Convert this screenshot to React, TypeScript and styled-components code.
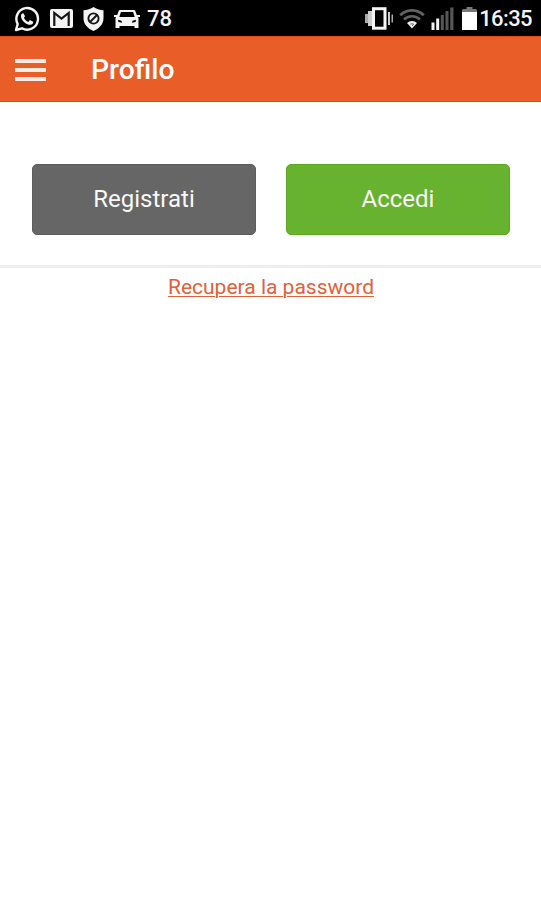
import React from "react";
import styled, { createGlobalStyle } from "styled-components";

const GlobalStyle = createGlobalStyle`
  * { box-sizing: border-box; }
  body { margin: 0; background: #fff; font-family: Roboto, "Noto Sans", sans-serif; }
`;

const Screen = styled.div`
  display: flex;
  flex-direction: column;
  min-height: 900px;
  background: #fff;
`;

const StatusBar = styled.div`
  display: flex;
  justify-content: space-between;
  height: 36px;
  padding: 0 9px 0 14px;
  background: #000;
  color: #f4f4f4;
`;

const StatusGroup = styled.div<{ $gap: number }>`
  display: flex;
  align-items: center;
  gap: ${(p) => p.$gap}px;
  height: 37px;
`;

const Glyph = styled.svg`
  display: block;
  flex: none;
`;

const StatusText = styled.span<{ $spacing?: number; $shift?: number }>`
  margin-left: ${(p) => p.$shift ?? 0}px;
  font-size: 22px;
  font-weight: 500;
  line-height: 36px;
  letter-spacing: ${(p) => p.$spacing ?? 0}px;
`;

const Header = styled.header`
  display: flex;
  align-items: center;
  gap: 45px;
  height: 66px;
  padding: 0 15px;
  background: #e95d28;
  border-top: 1px solid #e4480c;
  border-bottom: 1px solid #e4480c;
`;

const MenuButton = styled.button`
  display: flex;
  flex-direction: column;
  gap: 5px;
  width: 31px;
  margin-top: 2px;
  padding: 0;
  border: 0;
  background: none;
`;

const MenuLine = styled.span`
  height: 4px;
  background: #fdeae2;
`;

const Title = styled.h1`
  margin: 2px 0 0;
  color: #fff;
  font-size: 28.3px;
  font-weight: 500;
  line-height: 64px;
`;

const Actions = styled.div`
  display: grid;
  grid-template-columns: 1fr 1fr;
  gap: 30px;
  height: 166px;
  padding: 62px 31px 30px 32px;
  border-bottom: 3px solid #eeeeee;
`;

const ActionButton = styled.button<{ $color: string; $edge: string }>`
  height: 71px;
  padding: 0 0 2px;
  border: 1px solid ${(p) => p.$edge};
  border-radius: 5px;
  background: ${(p) => p.$color};
  color: #f8f8f8;
  font: 400 24px Roboto, "Noto Sans", sans-serif;
`;

const RecoverLink = styled.a`
  align-self: center;
  margin: 6px 0 0 1px;
  color: #e2603a;
  font-size: 21px;
  line-height: 26px;
  text-decoration: underline;
  text-decoration-thickness: 1px;
  text-underline-offset: 2px;
`;

const WhatsAppIcon = () => (
  <Glyph width="26" height="26" viewBox="0 0 26 26">
    <path d="M2 24l1.7-6A10.8 10.8 0 1 1 8 22.3z" fill="none" stroke="#f4f4f4" strokeWidth="2.4" strokeLinejoin="round" />
    <path d="M9.3 7.2c-.7-.3-2.3.7-2.3 2.7 0 4.4 5.2 9 9.2 8.9 1.9-.1 3.1-1.4 3-3.1l-3.3-1.6-1.6 1.8c-2-.7-3.6-2.3-4.4-4.2l1.2-1.5z" fill="#f4f4f4" />
  </Glyph>
);

const GmailIcon = () => (
  <Glyph width="23" height="19" viewBox="0 0 23 19">
    <rect width="23" height="19" rx="2" fill="#f4f4f4" />
    <path d="M4.3 17V4L11.5 9.7 18.7 4v13" fill="none" stroke="#161616" strokeWidth="2.2" />
  </Glyph>
);

const ShieldIcon = () => (
  <Glyph width="21" height="24" viewBox="0 0 21 24">
    <path d="M10.5 0C8 2 4 3.2.5 3.2v8C.5 17.5 5 21.5 10.5 24 16 21.5 20.5 17.5 20.5 11.2v-8C17 3.2 13 2 10.5 0z" fill="#f4f4f4" />
    <circle cx="10.5" cy="11.5" r="5.1" fill="none" stroke="#161616" strokeWidth="1.9" />
    <path d="M7 15l7-7" stroke="#161616" strokeWidth="1.9" />
  </Glyph>
);

const CarIcon = () => (
  <Glyph width="26" height="18" viewBox="0 0 26 18">
    <path
      fillRule="evenodd"
      d="M6.5 0h13c1 0 1.7.5 2 1.4L22.8 5H26v2h-2l.5 1.2V18h-4v-2h-15v2h-4V8.2L2 7H0V5h3.2l1.3-3.6C4.8.5 5.5 0 6.5 0zm.4 2L5.3 7h15.4l-1.6-5zM4 9.7l.4 2.3 3.8.7-.8-2zm18 0l-3.4 1-.8 2 3.8-.7z"
      fill="#f4f4f4"
    />
  </Glyph>
);

const VibrateIcon = () => (
  <Glyph width="28" height="23" viewBox="0 0 28 23">
    <path d="M0 7h3v9H0z" fill="#aaa" />
    <path d="M3 4h4v15H3zM23 5h2v13h-2z" fill="#ccc" />
    <path d="M26.5 7.5h1.5v8h-1.5z" fill="#aaa" />
    <rect x="8.5" y="1.7" width="11.5" height="19.5" fill="#000" stroke="#f4f4f4" strokeWidth="3" />
  </Glyph>
);

const WifiIcon = () => (
  <Glyph width="26" height="20" viewBox="0 0 26 20">
    <path d="M1.2 6.3a16.5 16.5 0 0 1 23.6 0M5 10.5a11.5 11.5 0 0 1 16 0" fill="none" stroke="#626262" strokeWidth="2.7" />
    <path d="M8 14a7 7 0 0 1 10 0l-5 5.5z" fill="#eee" />
    <path d="M11.3 15.2q1.7-1 3.4 0L13 17" fill="none" stroke="#666" strokeWidth="1" />
  </Glyph>
);

const SignalIcon = () => (
  <Glyph width="23" height="23" viewBox="0 0 23 23">
    <path d="M.5 15.5h3V23h-3zM5.2 11.5h3V23h-3z" fill="#f4f4f4" />
    <path d="M9.8 8h3v15h-3zM14.5 4h3v19h-3zM19.2.5h3.3V23h-3.3z" fill="#555" />
  </Glyph>
);

const BatteryIcon = () => (
  <Glyph width="15" height="23" viewBox="0 0 15 23">
    <path d="M4.5 0h6v2H14l1 1v3H0V3l1-1h3.5z" fill="#777" />
    <path d="M0 5h15v18H0z" fill="#fff" />
  </Glyph>
);

const BatteryClock = styled.div`
  display: flex;
  align-items: center;
  gap: 2px;
  margin-left: 2px;
`;

export default function App() {
  return (
    <Screen>
      <GlobalStyle />
      <StatusBar>
        <StatusGroup $gap={10}>
          <WhatsAppIcon />
          <GmailIcon />
          <ShieldIcon />
          <CarIcon />
          <StatusText $shift={-3}>78</StatusText>
        </StatusGroup>
        <StatusGroup $gap={6}>
          <VibrateIcon />
          <WifiIcon />
          <SignalIcon />
          <BatteryClock>
            <BatteryIcon />
            <StatusText $spacing={-0.6}>16:35</StatusText>
          </BatteryClock>
        </StatusGroup>
      </StatusBar>
      <Header>
        <MenuButton aria-label="Menu">
          <MenuLine />
          <MenuLine />
          <MenuLine />
        </MenuButton>
        <Title>Profilo</Title>
      </Header>
      <Actions>
        <ActionButton $color="#666666" $edge="#5c5c5c">Registrati</ActionButton>
        <ActionButton $color="#67b22e" $edge="#5bab1c">Accedi</ActionButton>
      </Actions>
      <RecoverLink>Recupera la password</RecoverLink>
    </Screen>
  );
}
